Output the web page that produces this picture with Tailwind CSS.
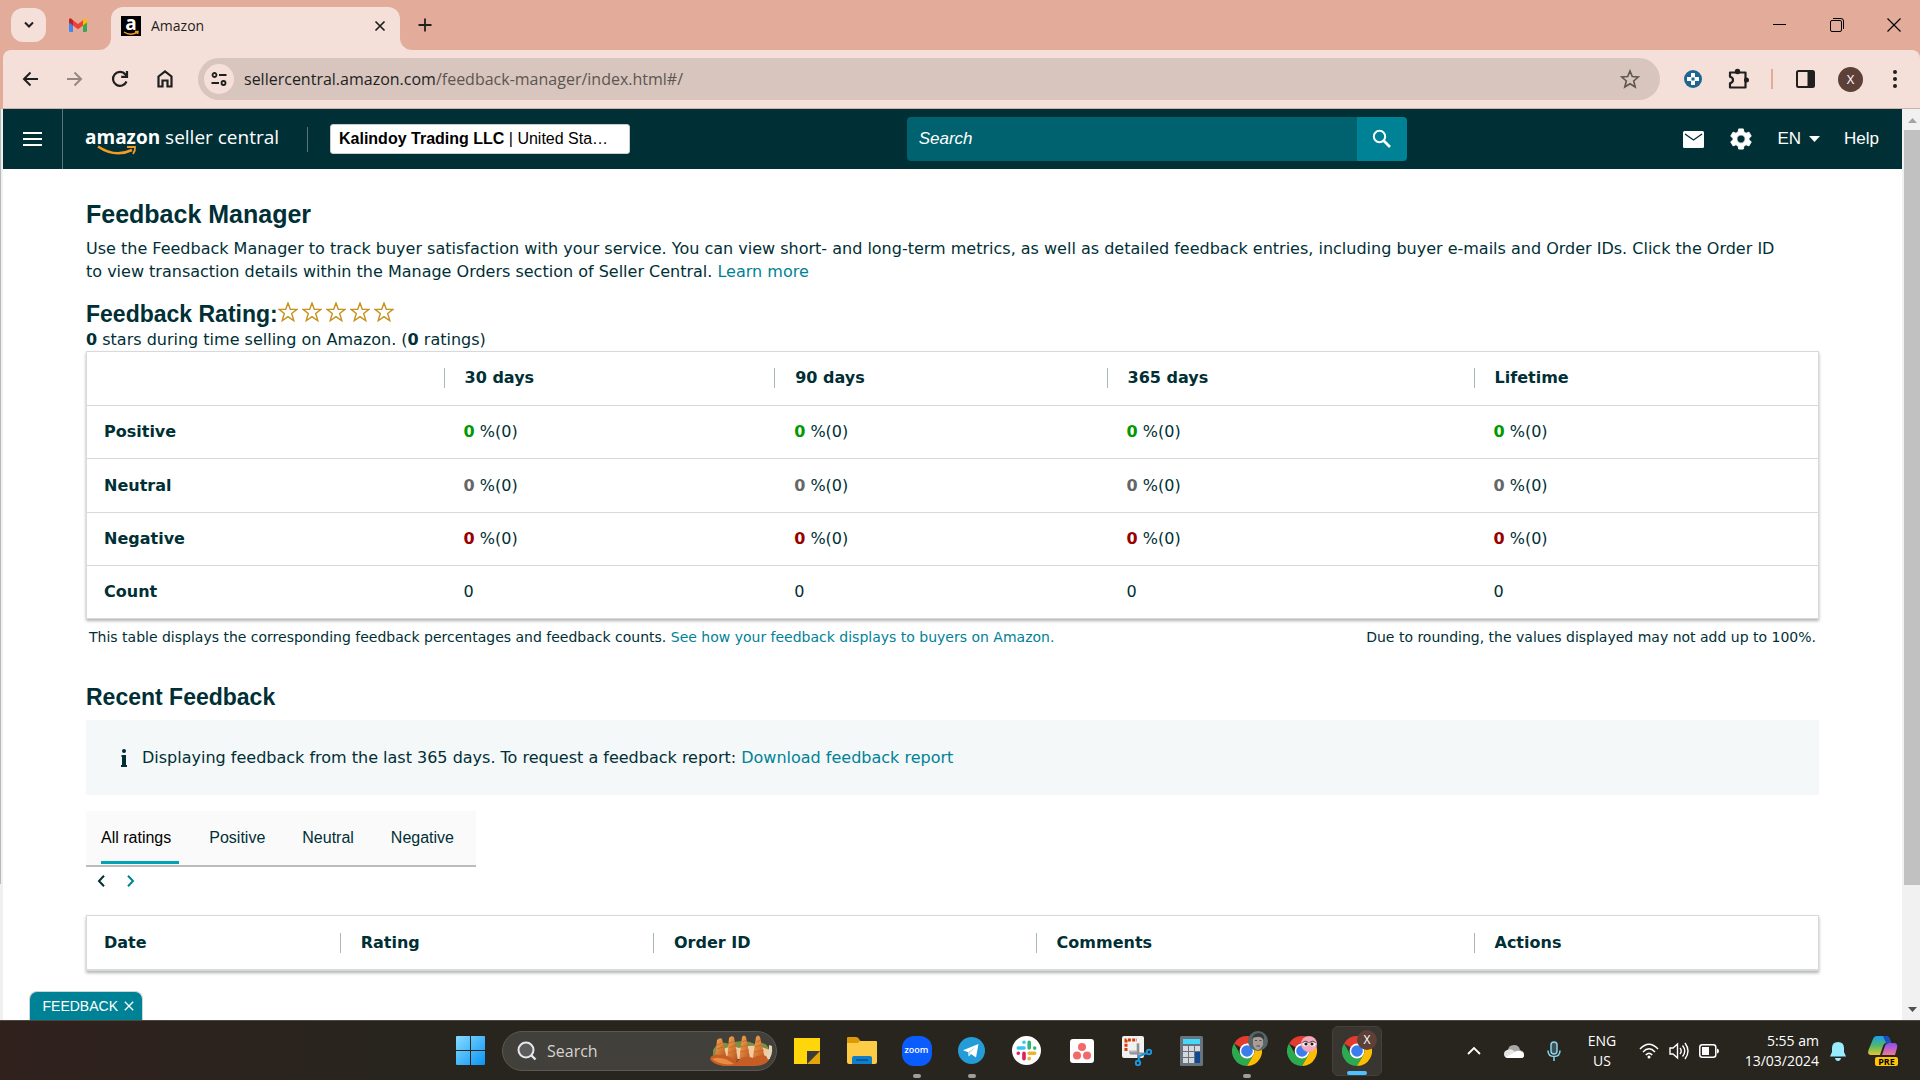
<!DOCTYPE html>
<html lang="en">
<head>
    <meta charset="UTF-8">
    <meta name="viewport" content="width=device-width, initial-scale=1.0">
    <title>Amazon</title>
    <script src="https://cdn.jsdelivr.net/npm/@tailwindcss/browser@4"></script>
</head>
<body class="min-h-screen flex flex-col overflow-x-hidden bg-white font-['Liberation_Sans',Arial,sans-serif] text-[#002f36]">

    <!-- Shared shapes -->
    <svg class="hidden" aria-hidden="true">
        <symbol id="star" viewBox="0 0 20 20">
            <path d="M10 1 12.300 7.200 19 7.400 13.700 11.500 15.800 18.700 10 14.600 4.200 18.700 6.300 11.500 1 7.400 7.700 7.200Z" fill="none" stroke="#c7911e" stroke-width="1.4"/>
        </symbol>
        <symbol id="chrome" viewBox="0 0 30 30">
            <path d="M15 15 2 7.500A15 15 0 0 1 28 7.500Z" fill="#e33b2e"/>
            <path d="M2 7.500A15 15 0 0 0 15 30L21.500 18.700 15 15 8.500 18.700Z" fill="#2da94f"/>
            <path d="M28 7.500A15 15 0 0 1 15 30L21.500 18.700A7.500 7.500 0 0 0 21.500 11.300L15 7.500Z" fill="#fdbd00"/>
            <path d="M15 7.500H28L21 13Z" fill="#fdbd00"/>
            <circle cx="15" cy="15" r="7.400" fill="#fff"/>
            <circle cx="15" cy="15" r="5.800" fill="#3b7ded"/>
        </symbol>
    </svg>

    <!-- Browser tabs -->
    <div class="h-[50px] bg-[#e3ab99] flex items-end justify-between font-['Open_Sans',sans-serif] text-[#1f1f1f]">
        <div class="flex items-end">
            <button aria-label="Search tabs" class="ml-[11px] mb-2 w-[35px] h-[34px] rounded-xl bg-[#f5e0d9] flex items-center justify-center">
                <svg class="w-3 h-3" viewBox="0 0 12 12" fill="none" stroke="#1f1f1f" stroke-width="2"><path d="M2 3.500 6 7.500 10 3.500"/></svg>
            </button>
            <button aria-label="Gmail" class="ml-[22px] mr-[23px] mb-[17px]">
                <svg class="w-5 h-4" viewBox="0 0 20 16">
                    <path d="M1 3V13.500Q1 15 2.500 15H5V7Z" fill="#4285f4"/>
                    <path d="M19 3V13.500Q19 15 17.500 15H15V7Z" fill="#34a853"/>
                    <path d="M15 3.200 17 1.600Q19 .6 19 3V5.500L15 8.500Z" fill="#fbbc04"/>
                    <path d="M5 3.200 3 1.600Q1 .6 1 3V5.500L5 8.500Z" fill="#c5221f"/>
                    <path d="M5 3.200 10 7 15 3.200V8.500L10 12.300 5 8.500Z" fill="#ea4335"/>
                </svg>
            </button>
            <div class="relative h-[43px] w-[289px] rounded-t-xl bg-[#f5e0d9] flex items-center pl-[10px] pr-[10px] pb-[6px] text-sm">
                <svg class="absolute bottom-0 -left-3 w-3 h-3" viewBox="0 0 12 12"><path d="M12 0V12H0A12 12 0 0 0 12 0Z" fill="#f5e0d9"/></svg>
                <svg class="absolute bottom-0 -right-3 w-3 h-3" viewBox="0 0 12 12"><path d="M0 0V12H12A12 12 0 0 1 0 0Z" fill="#f5e0d9"/></svg>
                <span class="relative w-5 h-5 bg-black text-white font-bold text-[19px] leading-[14px] text-center">a
                    <svg class="absolute left-0 bottom-0 w-5 h-5" viewBox="0 0 20 20" fill="none" stroke="#f59b23" stroke-width="1.500"><path d="M3 16Q9 20 16 16.500M14 15.500H17L16.500 18"/></svg>
                </span>
                <span class="ml-[10px]">Amazon</span>
                <button aria-label="Close tab" class="ml-auto p-1">
                    <svg class="w-3 h-3" viewBox="0 0 12 12" stroke="#1f1f1f" stroke-width="1.700"><path d="M1.500 1.500 10.500 10.500M10.500 1.500 1.500 10.500"/></svg>
                </button>
            </div>
            <button aria-label="New tab" class="ml-[18px] mb-[18px]">
                <svg class="w-[14px] h-[14px]" viewBox="0 0 14 14" stroke="#1f1f1f" stroke-width="1.800"><path d="M7 0.500V13.500M0.500 7H13.500"/></svg>
            </button>
        </div>
        <div class="flex items-center gap-[43px] pr-[19px] mb-[18px]">
            <button aria-label="Minimize"><svg class="w-[14px] h-[14px]" viewBox="0 0 14 14" stroke="#000"><path d="M0 6.500H13"/></svg></button>
            <button aria-label="Restore"><svg class="w-[14px] h-[14px]" viewBox="0 0 14 14" fill="none" stroke="#000"><rect x=".5" y="2.500" width="11" height="11" rx="1.500"/><path d="M3 .5H11Q13.500 .5 13.500 3V11"/></svg></button>
            <button aria-label="Close"><svg class="w-[14px] h-[14px]" viewBox="0 0 14 14" stroke="#000" stroke-width="1.200"><path d="M.5 .5 13.500 13.500M13.500 .5 .5 13.500"/></svg></button>
        </div>
    </div>

    <!-- Browser toolbar -->
    <div class="bg-[#e3ab99]">
        <div class="h-[59px] ml-[3px] rounded-t-lg bg-[#f5e0d9] border-b border-[#c9b3ac] flex items-center font-['Open_Sans',sans-serif]">
            <div class="flex items-center gap-[25px] pl-[17px] pr-[23px]">
                <button aria-label="Back"><svg class="w-5 h-5" viewBox="0 0 20 20" fill="none" stroke="#1f1f1f" stroke-width="2"><path d="M18 10H4M10.500 3.500 4 10 10.500 16.500"/></svg></button>
                <button aria-label="Forward"><svg class="w-5 h-5" viewBox="0 0 20 20" fill="none" stroke="#948884" stroke-width="2"><path d="M2 10H16M9.500 3.500 16 10 9.500 16.500"/></svg></button>
                <button aria-label="Reload"><svg class="w-5 h-5" viewBox="0 0 20 20" fill="none" stroke="#1f1f1f" stroke-width="2.200"><path d="M16.500 12.500A7 7 0 1 1 15.500 5.500L17 7.200"/><path d="M17 2V7.800H11.200" /></svg></button>
                <button aria-label="Home"><svg class="w-5 h-5" viewBox="0 0 20 20" fill="none" stroke="#1f1f1f" stroke-width="2.200"><path d="M3.500 7.500 10 2.500 16.500 7.500V17.500H12.500V11.500H7.500V17.500H3.500Z"/></svg></button>
            </div>
            <div class="flex-1 h-[42px] rounded-full bg-[#d7c5be] flex items-center pl-[6px] pr-5">
                <button aria-label="Site information" class="w-[30px] h-[30px] rounded-full bg-[#f5e0d9] flex items-center justify-center">
                    <svg class="w-4 h-4" viewBox="0 0 16 16" fill="none" stroke="#1f1f1f" stroke-width="1.800"><circle cx="3.500" cy="4" r="2"/><path d="M8 4H15.500M.5 12H8"/><circle cx="12.500" cy="12" r="2"/></svg>
                </button>
                <div class="ml-[10px] text-base text-[#5d5552]"><span class="text-[#1f1f1f]">sellercentral.amazon.com</span>/feedback-manager/index.html#/</div>
                <button aria-label="Bookmark this tab" class="ml-auto">
                    <svg class="w-5 h-5" viewBox="0 0 20 20" fill="none" stroke="#5f5653" stroke-width="1.600"><path d="M10 2 12.300 7.600 18.300 8 13.700 12 15.200 18 10 14.700 4.800 18 6.300 12 1.700 8 7.700 7.600Z"/></svg>
                </button>
            </div>
            <div class="flex items-center pl-6 pr-[15px]">
                <button aria-label="Extension"><svg class="w-[18px] h-[18px]" viewBox="0 0 18 18"><circle cx="9" cy="9" r="9" fill="#1d6592"/><path d="M7 3H11V7H15V11H11V15H7V11H3V7H7Z" fill="#fff"/><rect x="7.500" y="7.500" width="3" height="3" fill="#1d6592"/></svg></button>
                <button aria-label="Extensions" class="ml-[25px]"><svg class="w-[22px] h-[22px]" viewBox="0 0 22 22"><path d="M3 4.500H18.500V19.500H3V15.200Q6 14.500 6 12 6 9.500 3 8.800Z" fill="none" stroke="#1f1f1f" stroke-width="2.200" stroke-linejoin="round"/><circle cx="10.500" cy="3.500" r="2.700" fill="#1f1f1f"/><circle cx="19.500" cy="12" r="2.500" fill="#1f1f1f"/></svg></button>
                <span class="ml-[22px] w-[2px] h-5 bg-[#e3ab99]"></span>
                <button aria-label="Side panel" class="ml-[23px]"><svg class="w-[19px] h-[18px]" viewBox="0 0 19 18"><rect x="1" y="1" width="17" height="16" rx="1.500" fill="none" stroke="#1f1f1f" stroke-width="2"/><path d="M11.500 1H18V17H11.500Z" fill="#1f1f1f"/></svg></button>
                <button aria-label="Profile" class="ml-[23px] w-[25px] h-[25px] rounded-full bg-[#5d4037] text-white text-[13px] leading-[25px]">X</button>
                <button aria-label="Menu" class="ml-[22px]"><svg class="w-5 h-5" viewBox="0 0 20 20" fill="#1f1f1f"><circle cx="10" cy="3" r="2"/><circle cx="10" cy="10" r="2"/><circle cx="10" cy="17" r="2"/></svg></button>
            </div>
        </div>
    </div>

    <div class="flex-1 flex">
        <div class="w-[3px] bg-[#f0f0f0]"><div class="w-px h-[775px] bg-[#b8b8b8]"></div></div>

        <div class="relative flex-1 flex flex-col">
            <!-- Navigation -->
            <header class="h-[60px] bg-[#002f36] text-white flex items-center justify-between pr-[23px]">
                <div class="flex items-center self-stretch">
                    <button aria-label="Menu" class="w-[60px] self-stretch border-r border-[#5b7579] flex items-center justify-center">
                        <svg class="w-5 h-4" viewBox="0 0 20 16" stroke="#fff" stroke-width="2"><path d="M0 2H19M0 8H19M0 14H19"/></svg>
                    </button>
                    <a href="#" class="relative ml-[22px] w-[200px] pb-1 whitespace-nowrap font-['Open_Sans',sans-serif] text-[19px] leading-7"><span class="font-bold">amazon</span> seller central
                        <svg class="absolute left-3 -bottom-[2px] w-11 h-3" viewBox="0 0 44 12" fill="none" stroke="#f59b23"><path d="M1 1.500Q18 13 35 5" stroke-width="2.600"/><path d="M30 2H38Q38.500 5.500 36 9" stroke-width="1.800"/></svg>
                    </a>
                    <span class="ml-[22px] w-px h-[25px] bg-[#5b7579]"></span>
                    <button class="ml-[22px] h-[30px] w-[300px] rounded-[3px] border border-[#c9cfcf] bg-white text-black text-left px-2 truncate"><b>Kalindoy Trading LLC</b> | United Sta…</button>
                </div>
                <form class="flex h-11 w-[500px] rounded-sm overflow-hidden">
                    <input type="text" aria-label="Search" placeholder="Search" class="flex-1 min-w-0 bg-[#00616f] px-3 text-[17px] italic placeholder:text-white outline-none">
                    <button type="button" aria-label="Go" class="w-[50px] bg-[#008296] flex items-center justify-center">
                        <svg class="w-5 h-5" viewBox="0 0 20 20" fill="none" stroke="#fff"><circle cx="7.500" cy="7.500" r="5.700" stroke-width="2"/><path d="M11.500 11.500 18 18" stroke-width="2.600"/></svg>
                    </button>
                </form>
                <div class="flex items-center text-[17px]">
                    <button aria-label="Messages"><svg class="w-[21px] h-[17px]" viewBox="0 0 21 17"><rect width="21" height="17" rx="1.500" fill="#fff"/><path d="M2 3 10.500 9 19 3" fill="none" stroke="#002f36" stroke-width="1.400"/></svg></button>
                    <button aria-label="Settings" class="ml-[26px]"><svg class="w-[22px] h-[22px]" viewBox="0 0 24 24"><path fill="#fff" fill-rule="evenodd" stroke="#fff" stroke-linejoin="round" d="M9.500 1H14.500L15.200 4.400 17.500 5.700 20.700 4.500 23.200 8.900 20.700 11V13L23.200 15.100 20.700 19.500 17.500 18.300 15.200 19.600 14.500 23H9.500L8.800 19.600 6.500 18.300 3.300 19.500 .8 15.100 3.300 13V11L.8 8.900 3.300 4.500 6.500 5.700 8.800 4.400ZM12 7.500A4.500 4.500 0 1 0 12 16.500 4.500 4.500 0 1 0 12 7.500Z"/></svg></button>
                    <button class="ml-[25px] flex items-center gap-2">EN<svg class="w-[11px] h-[6px]" viewBox="0 0 11 6"><path d="M0 0H11L5.500 6Z" fill="#fff"/></svg></button>
                    <a href="#" class="ml-6">Help</a>
                </div>
            </header>

            <!-- Main Content -->
            <main class="pl-[83px] pr-[83px] pt-[30px] pb-12 font-['DejaVu_Sans',Verdana,sans-serif] text-base leading-[23px]">
                <h1 class="font-['Liberation_Sans',Arial,sans-serif] font-bold text-[25px] leading-[30px]">Feedback Manager</h1>
                <p class="mt-2 pr-8">Use the Feedback Manager to track buyer satisfaction with your service. You can view short- and long-term metrics, as well as detailed feedback entries, including buyer e-mails and Order IDs. Click the Order ID to view transaction details within the Manage Orders section of Seller Central. <a href="#" class="text-[#008296]">Learn more</a></p>

                <div class="mt-[17px] flex items-center">
                    <h2 class="font-['Liberation_Sans',Arial,sans-serif] font-bold text-[23px] leading-7">Feedback Rating:</h2>
                    <div class="mb-1 flex gap-1">
                        <svg class="w-5 h-5"><use href="#star"/></svg>
                        <svg class="w-5 h-5"><use href="#star"/></svg>
                        <svg class="w-5 h-5"><use href="#star"/></svg>
                        <svg class="w-5 h-5"><use href="#star"/></svg>
                        <svg class="w-5 h-5"><use href="#star"/></svg>
                    </div>
                </div>
                <p><b>0</b> stars during time selling on Amazon. (<b>0</b> ratings)</p>

                <!-- Rating summary -->
                <div class="border border-[#d5dbdb] shadow-[0_2px_3px_rgba(0,0,0,0.3)]">
                    <table class="w-full table-fixed text-left">
                        <thead>
                            <tr class="h-[53px] border-b border-[#d5dbdb]">
                                <td class="w-[20.6%]"></td>
                                <th class="w-[19.1%]"><div class="border-l border-[#aab7b8] pl-5 leading-5">30 days</div></th>
                                <th class="w-[19.2%]"><div class="border-l border-[#aab7b8] pl-5 leading-5">90 days</div></th>
                                <th class="w-[21.2%]"><div class="border-l border-[#aab7b8] pl-5 leading-5">365 days</div></th>
                                <th><div class="border-l border-[#aab7b8] pl-5 leading-5">Lifetime</div></th>
                            </tr>
                        </thead>
                        <tbody>
                            <tr class="h-[53px] border-b border-[#d5dbdb]">
                                <th class="pl-[17px]">Positive</th>
                                <td class="pl-5"><b class="text-[#090]">0</b> %(0)</td>
                                <td class="pl-5"><b class="text-[#090]">0</b> %(0)</td>
                                <td class="pl-5"><b class="text-[#090]">0</b> %(0)</td>
                                <td class="pl-5"><b class="text-[#090]">0</b> %(0)</td>
                            </tr>
                            <tr class="h-[54px] border-b border-[#d5dbdb]">
                                <th class="pl-[17px]">Neutral</th>
                                <td class="pl-5"><b class="text-[#666]">0</b> %(0)</td>
                                <td class="pl-5"><b class="text-[#666]">0</b> %(0)</td>
                                <td class="pl-5"><b class="text-[#666]">0</b> %(0)</td>
                                <td class="pl-5"><b class="text-[#666]">0</b> %(0)</td>
                            </tr>
                            <tr class="h-[53px] border-b border-[#d5dbdb]">
                                <th class="pl-[17px]">Negative</th>
                                <td class="pl-5"><b class="text-[#900]">0</b> %(0)</td>
                                <td class="pl-5"><b class="text-[#900]">0</b> %(0)</td>
                                <td class="pl-5"><b class="text-[#900]">0</b> %(0)</td>
                                <td class="pl-5"><b class="text-[#900]">0</b> %(0)</td>
                            </tr>
                            <tr class="h-[53px]">
                                <th class="pl-[17px]">Count</th>
                                <td class="pl-5">0</td>
                                <td class="pl-5">0</td>
                                <td class="pl-5">0</td>
                                <td class="pl-5">0</td>
                            </tr>
                        </tbody>
                    </table>
                </div>
                <div class="mt-2 px-[3px] flex justify-between text-sm">
                    <p>This table displays the corresponding feedback percentages and feedback counts. <a href="#" class="text-[#008296]">See how your feedback displays to buyers on Amazon.</a></p>
                    <p>Due to rounding, the values displayed may not add up to 100%.</p>
                </div>

                <h2 class="mt-[34px] font-['Liberation_Sans',Arial,sans-serif] font-bold text-[23px] leading-8">Recent Feedback</h2>
                <div class="mt-[7px] h-[75px] bg-[#f4f8f9] flex items-center pl-[34px]">
                    <svg class="w-2 h-[18px]" viewBox="0 0 8 18" fill="#002f36"><circle cx="4" cy="2" r="2"/><path d="M1.500 6H6V16H7V18H1V16H2V8H1.500Z"/></svg>
                    <p class="ml-[14px]">Displaying feedback from the last 365 days. To request a feedback report: <a href="#" class="text-[#008296]">Download feedback report</a></p>
                </div>

                <!-- Rating filter -->
                <div class="mt-4 flex w-fit gap-[30px] h-[56px] items-start pl-[15px] pr-[22px] bg-[#fafafa] border-b-2 border-[#b9bdbd] font-['Liberation_Sans',Arial,sans-serif]">
                    <button class="h-[53px] border-b-3 border-[#00a4b4] pr-2 pt-[3px] text-black">All ratings</button>
                    <button class="h-[53px] border-b-3 border-transparent pr-[7px] pt-[3px]">Positive</button>
                    <button class="h-[53px] border-b-3 border-transparent pr-[7px] pt-[3px]">Neutral</button>
                    <button class="h-[53px] border-b-3 border-transparent pt-[3px]">Negative</button>
                </div>
                <div class="flex gap-[22px] h-12 items-start pl-[11px] pt-2">
                    <button aria-label="Previous page" class="flex"><svg class="w-2 h-3" viewBox="0 0 8 12" fill="none" stroke="#002f36" stroke-width="2"><path d="M7 .8 2 6 7 11.200"/></svg></button>
                    <button aria-label="Next page" class="flex"><svg class="w-2 h-3" viewBox="0 0 8 12" fill="none" stroke="#008296" stroke-width="2"><path d="M1 .8 6 6 1 11.200"/></svg></button>
                </div>

                <!-- Feedback entries -->
                <div class="border border-b-2 border-[#d5dbdb] shadow-[0_2px_3px_rgba(0,0,0,0.3)]">
                    <table class="w-full table-fixed text-left">
                        <thead>
                            <tr class="h-[53px]">
                                <th class="w-[14.6%] pl-[17px]">Date</th>
                                <th class="w-[18.1%]"><div class="border-l border-[#aab7b8] pl-5 leading-5">Rating</div></th>
                                <th class="w-[22.1%]"><div class="border-l border-[#aab7b8] pl-5 leading-5">Order ID</div></th>
                                <th class="w-[25.3%]"><div class="border-l border-[#aab7b8] pl-5 leading-5">Comments</div></th>
                                <th><div class="border-l border-[#aab7b8] pl-5 leading-5">Actions</div></th>
                            </tr>
                        </thead>
                    </table>
                </div>
            </main>

            <button class="absolute left-[26px] bottom-0 h-[29px] w-[114px] rounded-t-lg border border-b-0 border-[#cdd6d7] bg-[#008296] text-white text-sm flex items-center justify-end pr-2 gap-[6px]">FEEDBACK
                <svg class="w-[10px] h-[10px]" viewBox="0 0 10 10" stroke="#fff" stroke-width="1.300"><path d="M.8 .8 9.200 9.200M9.200 .8 .8 9.200"/></svg>
            </button>
        </div>

        <!-- Scrollbar -->
        <div class="w-[18px] bg-[#f1f1f1] flex flex-col items-end">
            <svg class="w-4 h-[21px]" viewBox="0 0 16 21"><path d="M4 14 8.500 9 13 14Z" fill="#a3a3a3"/></svg>
            <div class="w-4 h-[755px] bg-[#c1c1c1]"></div>
            <svg class="mt-auto w-4 h-[21px]" viewBox="0 0 16 21"><path d="M4 8 8.500 13 13 8Z" fill="#505050"/></svg>
        </div>
    </div>

    <!-- Taskbar -->
    <footer class="h-[60px] border-t border-[#4a4a42] bg-[#28231d] bg-linear-to-r from-[#30211d] via-[#28241e] to-[#28241e] via-20% flex items-center pl-[443px] pr-[22px] font-['Open_Sans',sans-serif] text-white">
        <button aria-label="Start" class="w-[55px] flex justify-center">
            <svg class="w-[29px] h-[29px]" viewBox="0 0 29 29"><defs><linearGradient id="win" x1="0" y1="0" x2="1" y2="1"><stop offset="0" stop-color="#86dcff"/><stop offset="1" stop-color="#0a94f5"/></linearGradient></defs><path d="M0 1Q0 0 1 0H14V14H0ZM15 0H28Q29 0 29 1V14H15ZM0 15H14V29H1Q0 29 0 28ZM15 15H29V28Q29 29 28 29H15Z" fill="url(#win)"/></svg>
        </button>
        <label class="ml-1 mr-[2px] h-10 w-[275px] rounded-full border border-[#5c5753] bg-[#41403b] flex items-center pl-[14px] pr-[3px]">
            <svg class="w-5 h-5 shrink-0" viewBox="0 0 20 20" fill="none" stroke="#e6e6ee" stroke-width="2"><circle cx="9" cy="9" r="7.500" fill="#5d5c5c"/><path d="M14.500 14.500 18.500 18.500" stroke-width="2.400"/></svg>
            <input type="text" aria-label="Search" placeholder="Search" class="ml-[10px] flex-1 min-w-0 text-base placeholder:text-[#d6d3d0] outline-none">
            <svg class="w-[64px] h-[32px] shrink-0" viewBox="0 0 64 32">
                <defs><linearGradient id="spire" x1="0" y1="0" x2="1" y2="1"><stop offset="0" stop-color="#f6a850"/><stop offset="1" stop-color="#b4501c"/></linearGradient></defs>
                <path d="M4 15Q10 5 20 9 34 3 46 9 58 5 60 15V24H4Z" fill="#7c8f42"/>
                <path d="M10 17Q20 9 30 13 42 9 52 12L61 15V24H12Z" fill="#f2c9a0"/>
                <path d="M8 5Q11 2 13 4L18 24H6Z" fill="url(#spire)"/>
                <path d="M20 3Q22 0 25 2L29 26H18Z" fill="url(#spire)"/>
                <path d="M33 2Q35-1 37 2L42 28H30Z" fill="url(#spire)"/>
                <path d="M47 2Q49-1 51 2L57 28H43Z" fill="url(#spire)"/>
                <path d="M1 24Q2 19 10 20 20 19 28 27 34 19 44 23 50 19 57 21L60 25Q56 31 46 31H14Q3 29 1 24Z" fill="#c65d25"/>
                <path d="M3 24Q12 20 25 29 12 31 3 24Z" fill="#e98b43"/>
                <path d="M8 10 13 8M8 14 14 12M20 8 26 6M20 13 27 10M19 18 28 15M33 7 38 5M32 12 39 10M31 17 40 15M47 7 52 5M46 12 53 10M45 17 55 15" stroke="#c0662a" stroke-width=".8"/>
                <path d="M57 18Q60 20 60 10L63 11Q64 21 59 25Z" fill="#e7d2bb"/>
            </svg>
        </label>
        <button aria-label="Sticky Notes" class="w-[55px] flex justify-center">
            <svg class="w-[26px] h-[26px]" viewBox="0 0 26 26"><path d="M0 0H26V13L13 26H0Z" fill="#ffd60a"/><path d="M13 26 26 13V26Z" fill="#e3a60a"/><path d="M13 13H26L13 26Z" fill="#3b3a38"/></svg>
        </button>
        <button aria-label="File Explorer" class="w-[55px] flex justify-center">
            <svg class="w-[30px] h-[27px]" viewBox="0 0 30 27"><path d="M0 1Q0 0 1 0H9Q11 0 12 2L13.500 4H20V12H0Z" fill="#dc9a09"/><path d="M0 6H10Q12 6 13 4H29Q30 4 30 5V25Q30 27 28 27H2Q0 27 0 25Z" fill="#fecb45"/><path d="M5 27V21Q5 19 7 19H23Q25 19 25 21V27Z" fill="#117ec9"/><path d="M9 23H21" stroke="#0a508b" stroke-width="1.500"/></svg>
        </button>
        <button class="relative w-[55px] h-[58px] flex items-center justify-center">
            <span class="w-[30px] h-[30px] rounded-[12px] bg-[#0b5cff] text-[9px] leading-[28px] font-semibold">zoom</span>
            <span class="absolute bottom-[2px] left-6 w-2 h-1 rounded-full bg-[#a09d9a]"></span>
        </button>
        <button aria-label="Telegram" class="relative w-[55px] h-[58px] flex items-center justify-center">
            <svg class="w-[27px] h-[27px]" viewBox="0 0 27 27"><circle cx="13.500" cy="13.500" r="13.500" fill="#239cd8"/><path d="M5 13.200 20.500 7 18 20.500 13 17 10.800 19.500 10 15.200Z" fill="#fff"/><path d="M10 15.200 17.500 9.700 12 15.800 10.800 19.500Z" fill="#b8d8ea"/></svg>
            <span class="absolute bottom-[2px] left-6 w-2 h-1 rounded-full bg-[#a09d9a]"></span>
        </button>
        <button aria-label="Slack" class="w-[55px] flex justify-center">
            <svg class="w-[29px] h-[29px]" viewBox="0 0 29 29"><circle cx="14.500" cy="14.500" r="14.500" fill="#fff"/>
                <g fill="none" stroke-width="3.600" stroke-linecap="round"><path d="M12 6.200V6.300M6.300 12H12" stroke="#36c5f0"/><path d="M17.200 6.300V12M22.700 12V12.100" stroke="#2eb67d"/><path d="M17.200 17.200H22.700M17.200 22.600V22.700" stroke="#ecb22e"/><path d="M12 17.200V22.700M6.300 17.200V17.300" stroke="#e01e5a"/></g></svg>
        </button>
        <button aria-label="Asana" class="w-[55px] flex justify-center">
            <svg class="w-6 h-6" viewBox="0 0 24 24"><rect width="24" height="24" rx="3" fill="#fff"/><g fill="#f06a6a"><circle cx="12" cy="8" r="4"/><circle cx="7" cy="16.500" r="4"/><circle cx="17" cy="16.500" r="4"/></g></svg>
        </button>
        <button aria-label="Snipping Tool" class="w-[55px] flex justify-center">
            <svg class="w-[30px] h-[30px]" viewBox="0 0 30 30"><rect width="22" height="22" rx="2" fill="#f1f1f1"/><path d="M4 15V4H15" fill="none" stroke="#d83b01" stroke-width="3" stroke-dasharray="3 1.300"/><path d="M7 16H16V7" fill="none" stroke="#b5b5b8" stroke-width="3"/><path d="M16 22V8M8 17.500H23" stroke="#8d9095" stroke-width="2"/><g fill="none" stroke="#1b95dc" stroke-width="2"><circle cx="16" cy="27" r="2.200"/><circle cx="27" cy="16" r="2.200"/><path d="M16.500 24.500 17.500 20 25 17"/></g></svg>
        </button>
        <button aria-label="Calculator" class="w-[55px] flex justify-center">
            <svg class="w-[23px] h-[30px]" viewBox="0 0 23 30"><rect width="23" height="30" rx="1.500" fill="#68737e"/><rect x="3" y="3" width="17" height="5" fill="#45d8fb"/><g fill="#d5d9dd"><path d="M3 10H8V15H3ZM9 10H14V15H9ZM15 10H20V15H15ZM3 16H8V21H3ZM9 16H14V21H9ZM3 22H8V27H3ZM9 22H14V27H9Z"/></g><path d="M15 16H20V27H15Z" fill="#124a8f"/></svg>
        </button>
        <button aria-label="Chrome" class="relative w-[55px] h-[58px] flex items-center justify-center">
            <svg class="w-[30px] h-[30px]"><use href="#chrome"/></svg>
            <svg class="absolute top-[9px] left-[29px] w-5 h-5" viewBox="0 0 20 20"><circle cx="10" cy="10" r="10" fill="#596668"/><path d="M5 9Q5 4 10 4 15 4 15 9V14Q12 19 10 19 7 19 5 14Z" fill="#a89d98"/><path d="M4 8Q5 2 11 2 17 3 16 9 13 5 9 6 5 6 4 8Z" fill="#34393a"/><path d="M7 9.500H9M11.500 9.500H13.500M8.500 15H12" stroke="#4e4543"/></svg>
            <span class="absolute bottom-[2px] left-6 w-2 h-1 rounded-full bg-[#a09d9a]"></span>
        </button>
        <button aria-label="Chrome" class="relative w-[55px] h-[58px] flex items-center justify-center">
            <svg class="w-[30px] h-[30px]"><use href="#chrome"/></svg>
            <svg class="absolute top-[14px] left-[27px] w-4 h-4" viewBox="0 0 16 16"><circle cx="8" cy="8" r="8" fill="#f4a7bd"/><ellipse cx="4.500" cy="8" rx="3" ry="2.400" fill="#fff"/><ellipse cx="11.500" cy="8" rx="3" ry="2.400" fill="#fff"/><path d="M1.500 6.500Q4.500 4 7.500 6.500M8.500 6.500Q11.500 4 14.500 6.500" fill="none" stroke="#4b2c35"/><circle cx="5" cy="8" r="1.600" fill="#221e20"/><circle cx="11" cy="8" r="1.600" fill="#221e20"/></svg>
        </button>
        <button aria-label="Chrome, profile X" class="relative ml-[3px] w-[50px] h-[50px] rounded-md border border-[#45403b] bg-[#393530] flex items-center justify-center">
            <svg class="w-[30px] h-[30px]"><use href="#chrome"/></svg>
            <span class="absolute top-[3px] right-1 w-5 h-5 rounded-full bg-[#5d4037] text-xs leading-5">X</span>
            <span class="absolute bottom-0 left-[14px] w-5 h-1 rounded-full bg-[#4cc2ff]"></span>
        </button>

        <!-- System tray -->
        <div class="ml-auto flex items-center">
            <button aria-label="Show hidden icons" class="w-10 flex justify-center"><svg class="w-[14px] h-[10px]" viewBox="0 0 14 10" fill="none" stroke="#fff" stroke-width="1.800"><path d="M1 8 7 2 13 8"/></svg></button>
            <button aria-label="OneDrive" class="w-10 flex justify-center"><svg class="w-5 h-[14px]" viewBox="0 0 20 14"><path d="M4 7Q4 1 10 1 15 1 16 6 20 7 20 10L10 13Z" fill="#a9a7a5"/><path d="M3 6Q7 4 10 7 13 9 18 9 20 10 20 11 20 14 17 14H4Q0 14 0 10 0 7 3 6Z" fill="#e6e5e4"/><path d="M2 13 11 8Q13 6 16 7 20 8 20 11 20 14 17 14H4Q2.500 14 2 13Z" fill="#fff"/></svg></button>
            <button aria-label="Microphone" class="w-10 flex justify-center"><svg class="w-[14px] h-5" viewBox="0 0 14 20" fill="none" stroke="#8ad4e8" stroke-width="1.500"><rect x="4" y="1" width="6" height="12" rx="3" fill="#3c5259"/><path d="M1 9.500Q1 15.500 7 15.500 13 15.500 13 9.500M7 15.500V20"/></svg></button>
            <button class="w-14 text-sm leading-5 text-center">ENG<br>US</button>
            <button aria-label="Network, sound and battery" class="flex items-center gap-[10px] ml-[9px]">
                <svg class="w-5 h-4" viewBox="0 0 20 16" fill="none" stroke="#fff" stroke-width="1.500"><path d="M1 6Q10-3.500 19 6M4 9Q10 2.500 16 9M6.800 12Q10 8.500 13.200 12"/><circle cx="10" cy="14" r="1.500" fill="#fff" stroke="none"/></svg>
                <svg class="w-5 h-[18px]" viewBox="0 0 20 18" fill="none" stroke="#fff" stroke-width="1.400"><path d="M1 6H4L8.500 2V16L4 12H1ZM11 6Q13.500 9 11 12M13.500 3.500Q18 9 13.500 14.500M16 1Q22 9 16 17"/></svg>
                <svg class="w-5 h-[14px]" viewBox="0 0 20 14"><rect x=".8" y=".8" width="16" height="12.400" rx="2.500" fill="none" stroke="#fff" stroke-width="1.500"/><rect x="3" y="3" width="7" height="8" fill="#fff"/><path d="M18 4.500Q20 5 20 7 20 9 18 9.500Z" fill="#fff"/></svg>
            </button>
            <button class="ml-[10px] w-[90px] text-sm leading-5 text-right whitespace-nowrap">5:55 am<br>13/03/2024</button>
            <button aria-label="Notifications" class="ml-[11px]"><svg class="w-4 h-5" viewBox="0 0 16 20" fill="#99ebff"><path d="M2 7Q2 1 8 1 14 1 14 7V11L16 15.500H0L2 11ZM5 17H11Q10.500 20 8 20 5.500 20 5 17Z"/></svg></button>
            <button class="relative ml-[22px] w-[30px] h-[29px]">
                <svg class="w-[30px] h-[29px]" viewBox="0 0 30 29"><defs><linearGradient id="cp1" x1="0" y1="0" x2="0" y2="1"><stop offset="0" stop-color="#1a9df0"/><stop offset=".5" stop-color="#4db86c"/><stop offset="1" stop-color="#e8c52c"/></linearGradient><linearGradient id="cp2" x1="0" y1="0" x2="0" y2="1"><stop offset="0" stop-color="#8a4df0"/><stop offset="1" stop-color="#f27795"/></linearGradient></defs>
                    <path d="M5 3Q6 0 9 0H18Q21 0 22 4L23 7H18Q16 7 15 10L12 19H3Q-1 19 .5 14Z" fill="url(#cp1)"/><path d="M15 0H18Q21 0 22 4L23 7H18Z" fill="#1650c4"/><path d="M17 10Q18 7 21 7H26Q30 7 29 12L27 19H14Z" fill="url(#cp2)"/></svg>
                <span class="absolute left-[7px] -bottom-px w-[23px] rounded-[2px] bg-[#ffc60a] text-black text-[9px] leading-[9px] font-bold text-center">PRE</span>
            </button>
        </div>
    </footer>
</body>
</html>
